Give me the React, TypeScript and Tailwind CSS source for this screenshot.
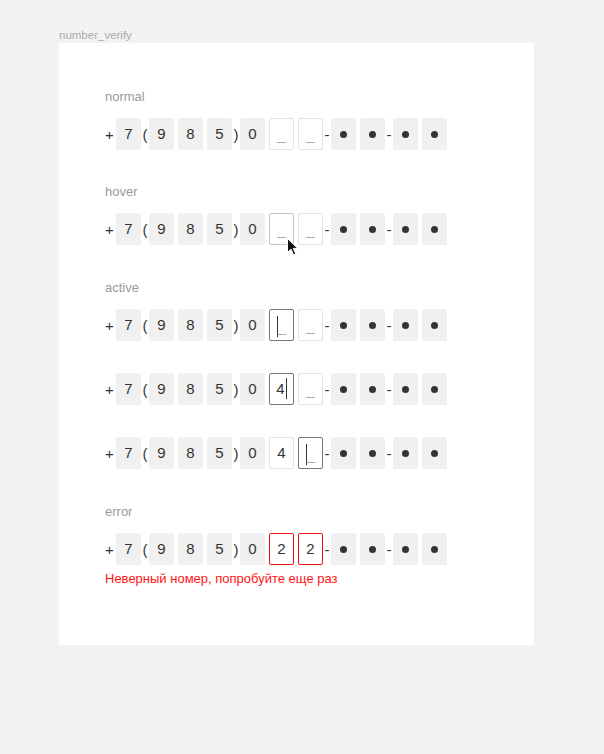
import React from "react";

type Cell =
  | { kind: "sep"; text: string; w?: string }
  | { kind: "fixed"; text: string }
  | { kind: "dot" }
  | { kind: "input"; state: "normal" | "hover" | "active" | "error"; value?: string; caret?: "before" | "after"; pointer?: boolean };

const buildRow = (a: Cell, b: Cell): Cell[] => [
  { kind: "sep", text: "+", w: "w-[11px]" },
  { kind: "fixed", text: "7" },
  { kind: "sep", text: "(" },
  { kind: "fixed", text: "9" },
  { kind: "fixed", text: "8" },
  { kind: "fixed", text: "5" },
  { kind: "sep", text: ")" },
  { kind: "fixed", text: "0" },
  a,
  b,
  { kind: "sep", text: "-" },
  { kind: "dot" },
  { kind: "dot" },
  { kind: "sep", text: "-" },
  { kind: "dot" },
  { kind: "dot" },
];

const Caret = ({ className = "" }: { className?: string }) => (
  <span className={"inline-block w-px h-[21px] bg-[#333] " + className} />
);

const Pointer = () => (
  <svg className="absolute left-[17px] top-[24px]" width="12" height="18" viewBox="0 0 12 18">
    <path d="M0.5 0.5 L0.5 14.5 L4 11.2 L6.6 17 L8.8 16 L6.3 10.4 L10.8 10.4 Z" fill="#111" stroke="#fff" strokeWidth="1" />
  </svg>
);

const Box = ({ cell }: { cell: Cell }) => {
  const base = "relative w-[25px] h-[32px] rounded-[2px] flex items-center justify-center text-[15px] text-[#333]";
  if (cell.kind === "fixed") return <div className={base + " bg-[#f0f0f0]"}>{cell.text}</div>;
  if (cell.kind === "dot")
    return (
      <div className={base + " bg-[#f0f0f0]"}>
        <span className="w-[7px] h-[7px] rounded-full bg-[#333]" />
      </div>
    );
  if (cell.kind !== "input") return null;
  const border =
    cell.state === "error"
      ? "border-[#ee1111]"
      : cell.state === "active"
        ? "border-[#777]"
        : cell.state === "hover"
          ? "border-[#c4c4c4]"
          : "border-[#e2e2e2]";
  return (
    <div className={base + " bg-white border " + border}>
      {cell.value ? (
        <span className="flex items-center">
          {cell.value}
          {cell.caret === "after" && <Caret className="ml-[1px] -mt-[2px]" />}
        </span>
      ) : (
        <span className="flex items-end">
          {cell.caret === "before" && <Caret className="mb-[-3px]" />}
          <span className="text-[#aaa] leading-none">_</span>
        </span>
      )}
      {cell.pointer && <Pointer />}
    </div>
  );
};

const Row = ({ cells }: { cells: Cell[] }) => (
  <div className="flex items-center h-[32px]">
    {cells.map((c, i) => {
      if (c.kind === "sep")
        return (
          <div key={i} className={(c.w ?? "w-[8px] text-center") + " text-[15px] text-[#333] leading-none"}>
            {c.text}
          </div>
        );
      const prev = cells[i - 1];
      const gap = prev && prev.kind !== "sep" ? "ml-[4px]" : "";
      return (
        <div key={i} className={gap}>
          <Box cell={c} />
        </div>
      );
    })}
  </div>
);

const Label = ({ text }: { text: string }) => (
  <div className="text-[13px] leading-[16px] text-[#9a9a9a] mb-[13px]">{text}</div>
);

const empty: Cell = { kind: "input", state: "normal" };

export default function App() {
  return (
    <div className="min-h-[754px] w-[604px] bg-[#f2f2f2] pt-[29px] pl-[59px]" style={{ fontFamily: '"Liberation Sans", Arial, sans-serif' }}>
      <div className="text-[11.5px] leading-[12px] text-[#aaa] mb-[2px]">number_verify</div>
      <div className="w-[475px] h-[602px] bg-white pt-[46px] pl-[46px]">
        {/* normal */}
        <Label text="normal" />
        <Row cells={buildRow(empty, empty)} />

        {/* hover */}
        <div className="mt-[34px]">
          <Label text="hover" />
          <Row cells={buildRow({ kind: "input", state: "hover", pointer: true }, empty)} />
        </div>

        {/* active */}
        <div className="mt-[35px]">
          <Label text="active" />
          <div className="flex flex-col gap-[32px]">
            <Row cells={buildRow({ kind: "input", state: "active", caret: "before" }, empty)} />
            <Row cells={buildRow({ kind: "input", state: "active", value: "4", caret: "after" }, empty)} />
            <Row
              cells={buildRow(
                { kind: "input", state: "normal", value: "4" },
                { kind: "input", state: "active", caret: "before" },
              )}
            />
          </div>
        </div>

        {/* error */}
        <div className="mt-[35px]">
          <Label text="error" />
          <Row
            cells={buildRow(
              { kind: "input", state: "error", value: "2" },
              { kind: "input", state: "error", value: "2" },
            )}
          />
          <div className="mt-[6px] text-[13px] leading-[16px] text-[#ff1515]">Неверный номер, попробуйте еще раз</div>
        </div>
      </div>
    </div>
  );
}
